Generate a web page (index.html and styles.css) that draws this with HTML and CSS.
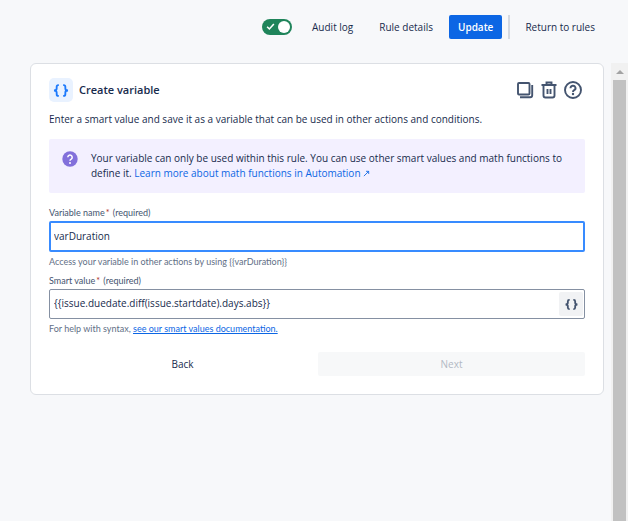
FILE: index.html
```html
<!DOCTYPE html>
<html lang="en">
<head>
<meta charset="utf-8">
<title>Create variable</title>
<link rel="stylesheet" href="styles.css">
</head>
<body>
<header class="topbar">
  <label class="toggle">
    <input type="checkbox" class="toggle-input" aria-label="Rule enabled" checked>
    <svg class="toggle-check" viewBox="0 0 8 8" aria-hidden="true"><path d="M1 4.2 3 6.2 7 1.8"/></svg>
  </label>
  <button type="button" class="nav-button audit">Audit log</button>
  <button type="button" class="nav-button details">Rule details</button>
  <button type="button" class="update">Update</button>
  <span class="divider"></span>
  <a href="#" class="nav-button">Return to rules</a>
</header>
<div class="workspace">
  <main class="content">
    <form class="card">
      <div class="card-header">
        <span class="badge">
          <svg class="braces" viewBox="0 0 16 12" aria-hidden="true"><path d="M6 1H5.500Q4 1 4 2.600V4.200Q4 6 1.500 6Q4 6 4 7.800V9.400Q4 11 5.500 11H6M10 1H10.500Q12 1 12 2.600V4.200Q12 6 14.500 6Q12 6 12 7.800V9.400Q12 11 10.500 11H10"/></svg>
        </span>
        <h1 class="title">Create variable</h1>
        <div class="actions">
          <button type="button" class="icon-button" aria-label="Duplicate">
            <svg viewBox="0 0 20 20" aria-hidden="true"><rect x="3" y="3" width="11.500" height="11.500" rx="1"/><path d="M17.200 5v10.200q0 2-2 2H5"/></svg>
          </button>
          <button type="button" class="icon-button" aria-label="Delete">
            <svg viewBox="0 0 20 20" aria-hidden="true"><path d="M2.500 5h15M7.500 4.500V2.500h5v2M4.500 5.500V15.500q0 2 2 2h7q2 0 2-2V5.500M8.500 9v5M11.500 9v5"/></svg>
          </button>
          <button type="button" class="icon-button" aria-label="Help">
            <svg viewBox="0 0 20 20" aria-hidden="true"><circle cx="10" cy="10" r="8"/><path d="M7.500 8.200a2.500 2.400 0 1 1 3.700 2q-1.200.6-1.200 1.800"/><circle class="dot" cx="10" cy="14" r="1.200"/></svg>
          </button>
        </div>
      </div>
      <p class="description">Enter a smart value and save it as a variable that can be used in other actions and conditions.</p>
      <div class="banner">
        <svg class="banner-icon" viewBox="0 0 16 16" aria-hidden="true"><circle cx="8" cy="8" r="7.700"/><path d="M5.800 6.200a2.200 2.200 0 1 1 3.400 1.900Q8 8.800 8 9.700"/><circle class="dot" cx="8" cy="11.900" r="1"/></svg>
        <p class="banner-text">Your variable can only be used within this rule. You can use other smart values and math functions to define it. <a href="#" class="link">Learn more about math functions in Automation <svg class="arrow" viewBox="0 0 8 8" aria-hidden="true"><path d="M1 7 6.500 1.500M3.500 1.500h3v3"/></svg></a></p>
      </div>
      <div class="field">
        <label for="variable" class="label">Variable name<span class="star">*</span> (required)</label>
        <input id="variable" class="input active" type="text" value="varDuration">
        <p class="help">Access your variable in other actions by using {{varDuration}}</p>
      </div>
      <div class="field">
        <label for="smart" class="label">Smart value<span class="star">*</span> (required)</label>
        <div class="input-group">
          <input id="smart" class="input" type="text" value="{{issue.duedate.diff(issue.startdate).days.abs}}">
          <button type="button" class="insert" aria-label="Insert smart value">
            <svg class="braces" viewBox="0 0 16 12" aria-hidden="true"><path d="M6 1H5.500Q4 1 4 2.600V4.200Q4 6 1.500 6Q4 6 4 7.800V9.400Q4 11 5.500 11H6M10 1H10.500Q12 1 12 2.600V4.200Q12 6 14.500 6Q12 6 12 7.800V9.400Q12 11 10.500 11H10"/></svg>
          </button>
        </div>
        <p class="help">For help with syntax, <a href="#" class="help-link">see our smart values documentation.</a></p>
      </div>
      <div class="buttons">
        <button type="button" class="back">Back</button>
        <button type="submit" class="next" disabled>Next</button>
      </div>
    </form>
  </main>
  <div class="scrollbar" aria-hidden="true">
    <span class="scroll-up"></span>
    <span class="scroll-thumb"></span>
  </div>
</div>
</body>
</html>
```
FILE: styles.css
```css
* { box-sizing: border-box; }
body {
  margin: 0;
  min-height: 100vh;
  display: flex;
  flex-direction: column;
  background: #f7f8fa;
  color: #172b4d;
  font: 10px/16px "Open Sans", "Noto Sans", sans-serif;
}
h1, p { margin: 0; }
button, input { font: inherit; color: inherit; }
button { border: 0; padding: 0; background: transparent; }
svg { fill: none; stroke: currentColor; }
.dot { fill: currentColor; stroke: none; }

.topbar {
  display: flex;
  align-items: center;
  justify-content: flex-end;
  padding: 15px 33px 24px 16px;
  height: 63px;
}
.toggle { position: relative; display: flex; margin-right: 20px; color: #fff; }
.toggle-input {
  appearance: none;
  width: 30px;
  height: 16px;
  margin: 0;
  border-radius: 8px;
  background: #1f845a;
}
.toggle-input::after {
  content: "";
  display: block;
  width: 12px;
  height: 12px;
  margin: 2px 2px 2px 16px;
  border-radius: 50%;
  background: #fff;
}
.toggle-check { position: absolute; left: 4px; top: 3px; width: 9px; height: 9px; stroke-width: 1.400; }
.nav-button { color: inherit; text-decoration: none; white-space: nowrap; }
.audit { margin-right: 26px; }
.details { margin-right: 16px; }
.update {
  height: 24px;
  padding: 0 9px;
  border-radius: 2px;
  background: #0c66e4;
  color: #fff;
  font-weight: 600;
}
.divider { width: 2px; height: 24px; margin: 0 15px 0 6px; background: #d5d9e0; }

.workspace { flex: 1; display: flex; }
.content { flex: 1; min-width: 0; padding: 0 7px 0 30px; }
.card {
  padding: 14px 18px 18px;
  border: 1px solid #dcdfe4;
  border-radius: 6px;
  background: #fff;
}
.card-header { display: flex; align-items: center; }
.badge {
  display: flex;
  align-items: center;
  justify-content: center;
  width: 24px;
  height: 24px;
  border-radius: 5px;
  background: #e9f2ff;
  color: #1d7afc;
}
.braces { width: 18px; height: 13px; stroke-width: 1.700; }
.title { margin-left: 6px; font-size: 11px; font-weight: 600; }
.actions { display: flex; gap: 4px; margin-left: auto; margin-right: 2px; color: #44546f; }
.icon-button { width: 20px; height: 20px; }
.icon-button svg { display: block; width: 20px; height: 20px; stroke-width: 1.900; }
.description { margin-top: 9px; }
.banner {
  display: flex;
  gap: 13px;
  margin-top: 12px;
  padding: 12px 13px;
  border-radius: 2px;
  background: #f3f0ff;
  line-height: 15px;
}
.banner-icon { flex: none; width: 16px; height: 16px; stroke: #fff; stroke-width: 1.500; }
.banner-icon circle { fill: #8270db; stroke: none; }
.banner-icon .dot { fill: #fff; }
.link { color: #0c66e4; text-decoration: none; }
.arrow { width: 7px; height: 7px; }

.field { margin-top: 3px; }
.banner + .field { margin-top: 12px; }
.label, .help { display: block; font-family: Lato, "Open Sans", sans-serif; font-size: 9px; }
.label { color: #44546f; }
.star { margin: 0 1px; color: #ae2e24; }
.input {
  display: block;
  width: 100%;
  height: 30px;
  padding: 0 4px 2px;
  border: 1px solid #8590a2;
  border-radius: 2px;
  background: #fff;
  outline: none;
}
.input.active { height: 31px; padding: 0 3px 2px; border: 2px solid #388bff; }
.help { margin-top: 2px; color: #626f86; }
.help-link { color: #0c66e4; }
.input-group { position: relative; }
.insert {
  position: absolute;
  top: 3px;
  right: 2px;
  display: flex;
  align-items: center;
  justify-content: center;
  width: 24px;
  height: 24px;
  border-radius: 2px;
  background: #f1f2f4;
  color: #44546f;
}
.insert .braces { width: 15px; height: 11px; stroke-width: 2; }
.buttons { display: grid; grid-template-columns: 1fr 1fr; gap: 2px; margin-top: 15px; }
.back, .next { height: 24px; border-radius: 2px; }
.next { background: #f7f8f9; color: #b3b9c4; }

.scrollbar {
  display: flex;
  flex-direction: column;
  align-items: center;
  width: 17px;
  background: #f1f1f1;
}
.scroll-up {
  height: 11px;
  margin-bottom: 6px;
  border: 4px solid transparent;
  border-top-width: 0;
  border-bottom: 4px solid #a3a3a3;
}
.scroll-thumb { flex: 1; width: 13px; background: #c1c1c1; }
```
